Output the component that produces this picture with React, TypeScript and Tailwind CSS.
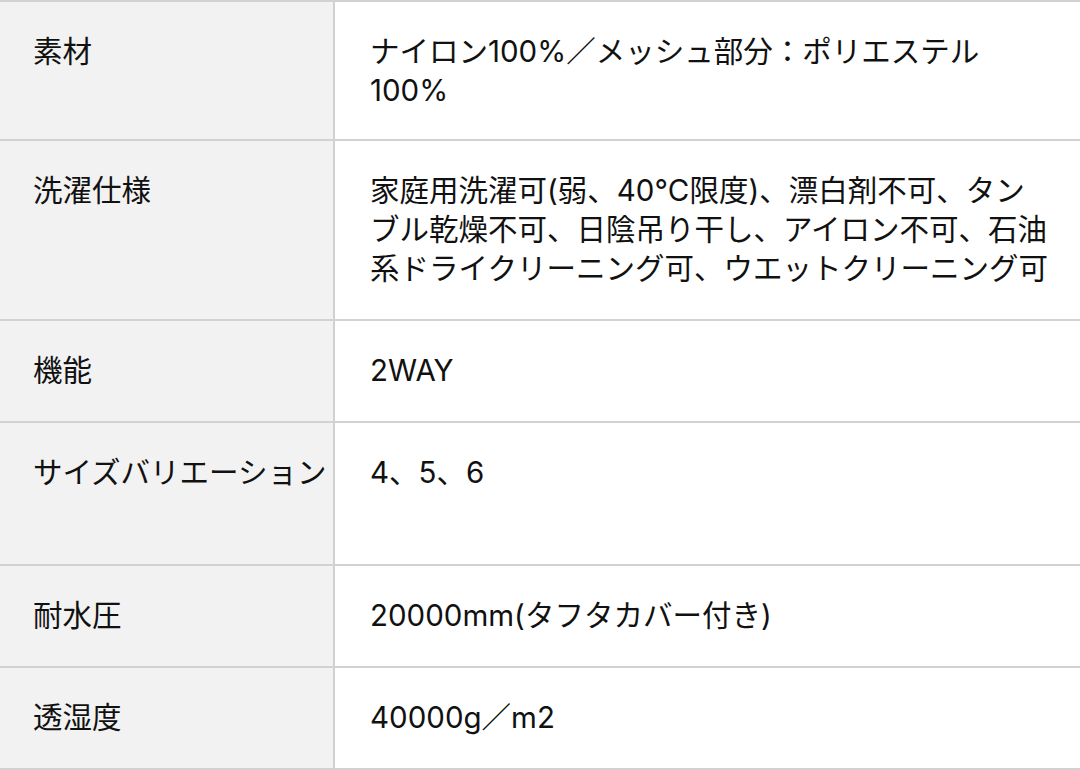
const rows: { label: string; lines: string[]; tall?: boolean }[] = [
  { label: "素材", lines: ["ナイロン100%／メッシュ部分：ポリエステル", "100%"] },
  {
    label: "洗濯仕様",
    lines: [
      "家庭用洗濯可(弱、40°C限度)、漂白剤不可、タン",
      "ブル乾燥不可、日陰吊り干し、アイロン不可、石油",
      "系ドライクリーニング可、ウエットクリーニング可",
    ],
  },
  { label: "機能", lines: ["2WAY"] },
  { label: "サイズバリエーション", lines: ["4、5、6"], tall: true },
  { label: "耐水圧", lines: ["20000mm(タフタカバー付き)"] },
  { label: "透湿度", lines: ["40000g／m2"] },
];

export default function App() {
  return (
    <div
      className="w-[1080px] h-[770px] overflow-hidden bg-white text-[#111] text-[29.5px] leading-[39px]"
      style={{ fontFamily: 'Inter, "Noto Sans CJK JP", sans-serif' }}
    >
      <div className="border-t-2 border-[#d2d2d2]">
        {rows.map((row, i) => (
          <div key={row.label} className="flex border-b-2 border-[#d2d2d2]">
            <div
              className={`w-[335px] shrink-0 bg-[#f2f2f2] border-r-2 border-[#d0d0d0] pl-[33px] pt-[30px] whitespace-nowrap ${
                i === 0 ? "pb-[29px]" : "pb-[31px]"
              } ${row.tall ? "min-h-[141px]" : ""}`}
            >
              {row.label}
            </div>
            <div className={`flex-1 pl-[35px] pr-4 pt-[30px] ${i === 0 ? "pb-[29px]" : "pb-[31px]"}`}>
              {row.lines.map((line) => (
                <div key={line} className="whitespace-nowrap">
                  {line}
                </div>
              ))}
            </div>
          </div>
        ))}
      </div>
    </div>
  );
}
